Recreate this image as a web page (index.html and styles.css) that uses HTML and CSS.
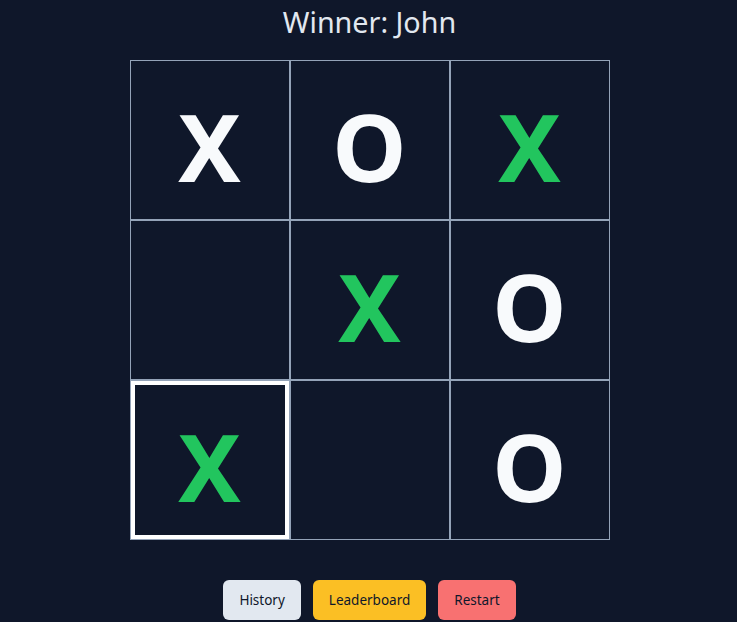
FILE: index.html
```html
<!DOCTYPE html>
<html>
<head>
<meta charset="utf-8">
<link rel="stylesheet" href="styles.css">
</head>
<body>
<main class="app">
  <h1 class="status">Winner: John</h1>
  <div class="board">
    <div class="cell">X</div>
    <div class="cell">O</div>
    <div class="cell win">X</div>
    <div class="cell"></div>
    <div class="cell win">X</div>
    <div class="cell">O</div>
    <div class="cell win selected">X</div>
    <div class="cell"></div>
    <div class="cell">O</div>
  </div>
  <div class="actions">
    <button class="btn btn-history">History</button>
    <button class="btn btn-leader">Leaderboard</button>
    <button class="btn btn-restart">Restart</button>
  </div>
</main>
</body>
</html>
```
FILE: styles.css
```css
html, body {
  margin: 0;
  padding: 0;
  background: #0f172a;
  height: 100%;
  overflow: hidden;
}
body {
  font-family: "Noto Sans", "Open Sans", sans-serif;
}
.app {
  display: flex;
  flex-direction: column;
  align-items: center;
  padding-left: 2px;
}
.status {
  margin: 4px 0 0;
  height: 56px;
  font-size: 28.7px;
  line-height: 36px;
  font-weight: 400;
  color: #e2e8f0;
}
.board {
  display: grid;
  grid-template-columns: repeat(3, 160px);
  grid-template-rows: repeat(3, 160px);
}
.cell {
  box-sizing: border-box;
  border: 1px solid #94a3b8;
  display: flex;
  align-items: center;
  justify-content: center;
  font-size: 94px;
  font-weight: 700;
  color: #f8fafc;
  padding-top: 12px;
}
.cell.win {
  color: #22c55e;
}
.cell.selected {
  box-shadow: inset 0 0 0 4px #ffffff;
}
.actions {
  display: flex;
  gap: 12px;
  margin-top: 40px;
}
.btn {
  height: 40px;
  padding: 0 16px;
  border: none;
  border-radius: 6px;
  font-family: "Noto Sans", "Open Sans", sans-serif;
  font-size: 13.5px;
  font-weight: 400;
  color: #0f172a;
}
.btn-history { background: #e2e8f0; }
.btn-leader { background: #fbbf24; }
.btn-restart { background: #f87171; }
```
